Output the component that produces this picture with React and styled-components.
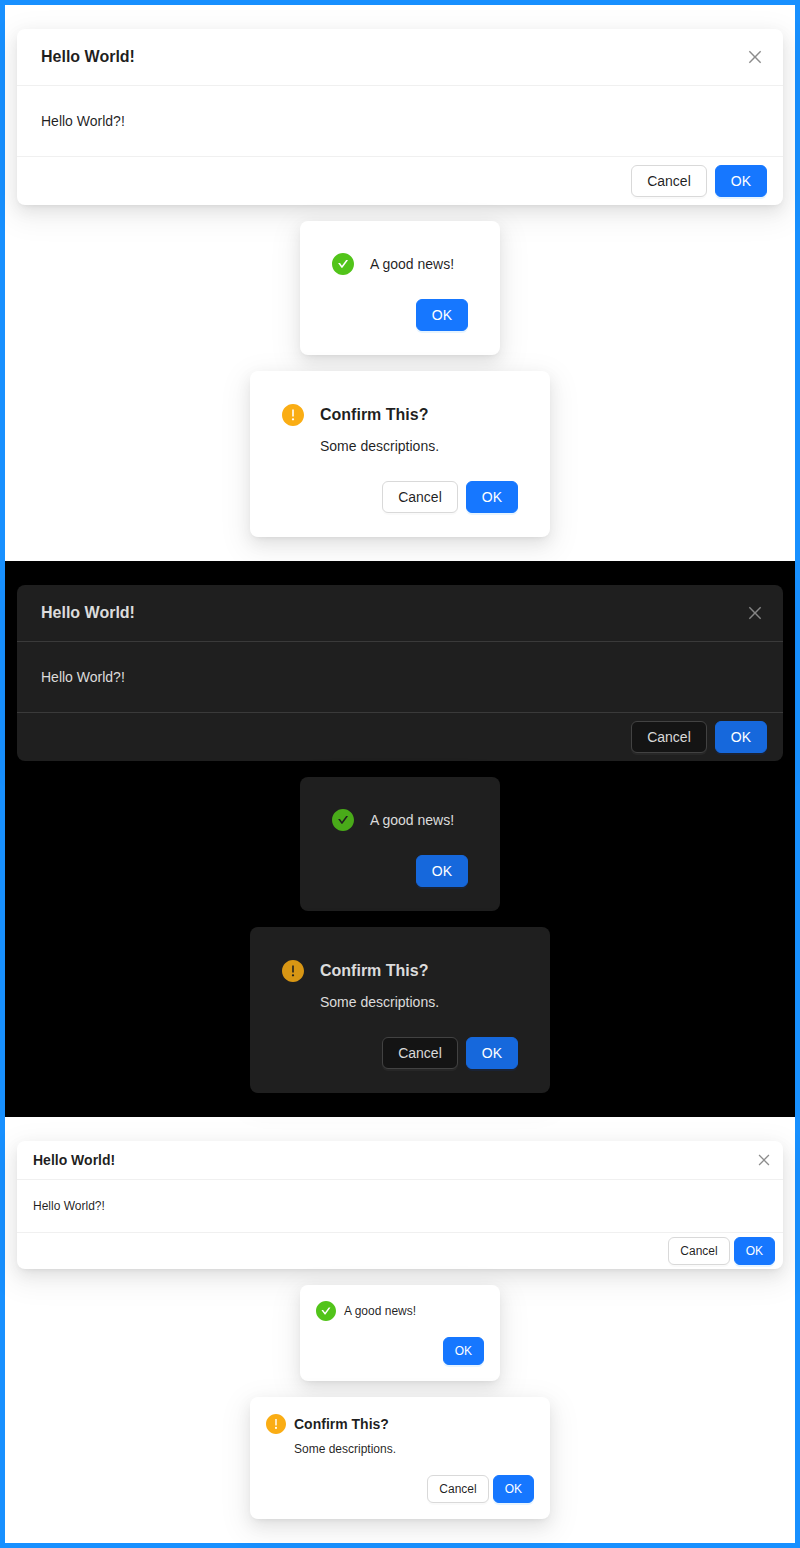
import React from 'react';
import styled, { createGlobalStyle, ThemeProvider } from 'styled-components';

const GlobalStyle = createGlobalStyle`
  *, *::before, *::after { box-sizing: border-box; }
  body { margin: 0; background: #fff; }
`;

const lightColors = {
  page: '#fff',
  card: '#fff',
  text: 'rgba(0, 0, 0, 0.88)',
  muted: 'rgba(0, 0, 0, 0.45)',
  split: '#f0f0f0',
  primary: '#1677ff',
  primaryShadow: '0 2px 0 rgba(5, 145, 255, 0.1)',
  button: '#fff',
  buttonBorder: '#d9d9d9',
  buttonShadow: '0 2px 0 rgba(0, 0, 0, 0.02)',
  success: '#52c41a',
  warning: '#faad14',
};

const darkColors = {
  page: '#000',
  card: '#1f1f1f',
  text: 'rgba(255, 255, 255, 0.85)',
  muted: 'rgba(255, 255, 255, 0.45)',
  split: 'rgba(253, 253, 253, 0.12)',
  primary: '#1668dc',
  primaryShadow: '0 2px 0 rgba(0, 60, 180, 0.15)',
  button: '#141414',
  buttonBorder: '#424242',
  buttonShadow: '0 2px 0 rgba(255, 255, 255, 0.04)',
  success: '#49aa19',
  warning: '#d89614',
};

const regularSizes = {
  font: '14px/22px',
  title: '16px/24px',
  headerPadding: '16px 0 16px 24px',
  headerHeight: 56,
  closeIcon: 16,
  bodyPadding: '24px',
  footerPadding: '8px 16px',
  confirmPadding: '32px 32px 24px',
  icon: 22,
  iconGap: 16,
  textGap: 8,
  actionsGap: 24,
  buttonHeight: 32,
  buttonPadding: 15,
  buttonGap: 8,
};

const compactSizes = {
  font: '12px/20px',
  title: '14px/22px',
  headerPadding: '8px 0 8px 16px',
  headerHeight: 38,
  closeIcon: 14,
  bodyPadding: '16px',
  footerPadding: '4px 8px',
  confirmPadding: '16px',
  icon: 20,
  iconGap: 8,
  textGap: 4,
  actionsGap: 16,
  buttonHeight: 28,
  buttonPadding: 11,
  buttonGap: 4,
};

const family = '"Liberation Sans", Arial, sans-serif';

const Frame = styled.main`
  border: 5px solid #1890ff;
`;

const Section = styled.section`
  display: flex;
  flex-direction: column;
  align-items: center;
  gap: 16px;
  padding: 24px 12px;
  background: ${({ theme }) => theme.page};
  color: ${({ theme }) => theme.text};
  font: ${({ theme }) => theme.font} ${family};
`;

const Card = styled.article`
  width: ${({ $width }) => $width || '100%'};
  border-radius: 8px;
  background: ${({ theme }) => theme.card};
  box-shadow:
    0 6px 16px 0 rgba(0, 0, 0, 0.08),
    0 3px 6px -4px rgba(0, 0, 0, 0.12),
    0 9px 28px 8px rgba(0, 0, 0, 0.05);
`;

const ConfirmCard = styled(Card)`
  padding: ${({ theme }) => theme.confirmPadding};
`;

const Title = styled.h2`
  margin: 0;
  font: 600 ${({ theme }) => theme.title} ${family};
`;

const Header = styled.header`
  display: flex;
  align-items: center;
  justify-content: space-between;
  height: ${({ theme }) => theme.headerHeight + 1}px;
  border-bottom: 1px solid ${({ theme }) => theme.split};
  padding: ${({ theme }) => theme.headerPadding};
`;

const CloseButton = styled.button`
  display: flex;
  align-items: center;
  justify-content: center;
  width: ${({ theme }) => theme.headerHeight}px;
  height: ${({ theme }) => theme.headerHeight}px;
  border: 0;
  padding: 0;
  background: transparent;
  color: ${({ theme }) => theme.muted};

  svg {
    width: ${({ theme }) => theme.closeIcon}px;
    height: ${({ theme }) => theme.closeIcon}px;
  }
`;

const Body = styled.div`
  padding: ${({ theme }) => theme.bodyPadding};
`;

const Actions = styled.div`
  display: flex;
  justify-content: flex-end;
  gap: ${({ theme }) => theme.buttonGap}px;
`;

const Footer = styled(Actions)`
  border-top: 1px solid ${({ theme }) => theme.split};
  padding: ${({ theme }) => theme.footerPadding};
`;

const ConfirmActions = styled(Actions)`
  margin-top: ${({ theme }) => theme.actionsGap}px;
`;

const Button = styled.button`
  height: ${({ theme }) => theme.buttonHeight}px;
  border: 1px solid ${({ theme, $primary }) => ($primary ? theme.primary : theme.buttonBorder)};
  border-radius: 6px;
  padding: 0 ${({ theme }) => theme.buttonPadding}px;
  background: ${({ theme, $primary }) => ($primary ? theme.primary : theme.button)};
  box-shadow: ${({ theme, $primary }) => ($primary ? theme.primaryShadow : theme.buttonShadow)};
  color: ${({ theme, $primary }) => ($primary ? '#fff' : theme.text)};
  font: ${({ theme }) => theme.font} ${family};
`;

const Message = styled.div`
  display: grid;
  grid-template-columns: auto 1fr;
  align-items: center;
  column-gap: ${({ theme }) => theme.iconGap}px;
  row-gap: ${({ theme }) => theme.textGap}px;
`;

const Description = styled.div`
  grid-column: 2;
`;

const StatusIcon = styled.svg`
  display: block;
  width: ${({ theme }) => theme.icon}px;
  height: ${({ theme }) => theme.icon}px;
  color: ${({ theme, $status }) => theme[$status]};
`;

const statusPaths = {
  success:
    'M512 64C264.6 64 64 264.6 64 512s200.6 448 448 448 448-200.6 448-448S759.4 64 512 64zm193.5 301.7l-210.6 292a31.8 31.8 0 01-51.7 0L318.5 484.9c-3.8-5.3 0-12.7 6.5-12.7h46.9c10.2 0 19.9 4.9 25.9 13.3l71.2 98.8 157.2-218c6-8.3 15.6-13.3 25.9-13.3H699c6.5 0 10.3 7.4 6.5 12.7z',
  warning:
    'M512 64C264.6 64 64 264.6 64 512s200.6 448 448 448 448-200.6 448-448S759.4 64 512 64zm-32 232c0-4.4 3.6-8 8-8h48c4.4 0 8 3.6 8 8v272c0 4.4-3.6 8-8 8h-48c-4.4 0-8-3.6-8-8V296zm32 440a48.01 48.01 0 010-96 48.01 48.01 0 010 96z',
};

function Status({ type }) {
  return (
    <StatusIcon $status={type} viewBox="64 64 896 896" fill="currentColor" aria-hidden="true">
      <path d={statusPaths[type]} />
    </StatusIcon>
  );
}

function CloseIcon() {
  return (
    <svg viewBox="64 64 896 896" fill="currentColor" aria-hidden="true">
      <path d="M799.9 166.3l57.8 57.8L569.9 512l287.8 287.8-57.8 57.9L512 569.9 224.2 857.7l-57.9-57.9L454.1 512 166.3 224.2l57.9-57.9L512 454.1z" />
    </svg>
  );
}

function Modal() {
  return (
    <Card>
      <Header>
        <Title>Hello World!</Title>
        <CloseButton type="button" aria-label="Close">
          <CloseIcon />
        </CloseButton>
      </Header>
      <Body>Hello World?!</Body>
      <Footer>
        <Button type="button">Cancel</Button>
        <Button type="button" $primary>OK</Button>
      </Footer>
    </Card>
  );
}

function SuccessModal() {
  return (
    <ConfirmCard $width="200px">
      <Message>
        <Status type="success" />
        <div>A good news!</div>
      </Message>
      <ConfirmActions>
        <Button type="button" $primary>OK</Button>
      </ConfirmActions>
    </ConfirmCard>
  );
}

function ConfirmModal() {
  return (
    <ConfirmCard $width="300px">
      <Message>
        <Status type="warning" />
        <Title>Confirm This?</Title>
        <Description>Some descriptions.</Description>
      </Message>
      <ConfirmActions>
        <Button type="button">Cancel</Button>
        <Button type="button" $primary>OK</Button>
      </ConfirmActions>
    </ConfirmCard>
  );
}

const themes = [
  { name: 'light', ...lightColors, ...regularSizes },
  { name: 'dark', ...darkColors, ...regularSizes },
  { name: 'compact', ...lightColors, ...compactSizes },
];

export default function App() {
  return (
    <>
      <GlobalStyle />
      <Frame>
        {themes.map((theme) => (
          <ThemeProvider key={theme.name} theme={theme}>
            <Section>
              <Modal />
              <SuccessModal />
              <ConfirmModal />
            </Section>
          </ThemeProvider>
        ))}
      </Frame>
    </>
  );
}
